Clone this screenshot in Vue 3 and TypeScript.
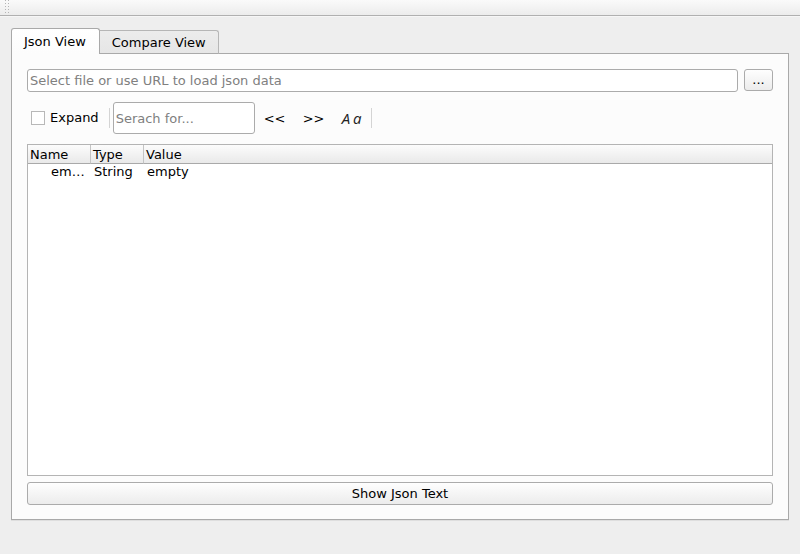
<script setup lang="ts">
import { ref } from 'vue'

interface JsonNode {
  name: string
  type: string
  value: string
}

type TabId = 'json' | 'compare'

const tabs: { id: TabId; label: string }[] = [
  { id: 'json', label: 'Json View' },
  { id: 'compare', label: 'Compare View' },
]

const activeTab = ref<TabId>('json')
const source = ref('')
const search = ref('')
const expand = ref(false)
const matchCase = ref(false)
const nodes = ref<JsonNode[]>([{ name: 'empty', type: 'String', value: 'empty' }])
</script>

<template>
  <div class="window">
    <header class="toolbar"><span class="grip"></span></header>

    <main class="content">
      <div class="tabs" role="tablist">
        <button
          v-for="tab in tabs"
          :key="tab.id"
          type="button"
          role="tab"
          class="tab"
          :class="{ active: tab.id === activeTab }"
          :aria-selected="tab.id === activeTab"
          @click="activeTab = tab.id"
        >{{ tab.label }}</button>
      </div>

      <section class="pane" role="tabpanel">
        <div class="source-row">
          <input
            v-model="source"
            class="field source"
            type="text"
            aria-label="Json source"
            placeholder="Select file or use URL to load json data"
          />
          <button type="button" class="push browse" aria-label="Browse">...</button>
        </div>

        <div class="tools">
          <label class="expand">
            <input v-model="expand" type="checkbox" class="check" />
            <span>Expand</span>
          </label>
          <span class="separator"></span>
          <input v-model="search" class="field search" type="text" aria-label="Search" placeholder="Serach for..." />
          <button type="button" class="tool" aria-label="Find previous">&lt;&lt;</button>
          <button type="button" class="tool" aria-label="Find next">&gt;&gt;</button>
          <button
            type="button"
            class="tool case"
            aria-label="Match case"
            :aria-pressed="matchCase"
            @click="matchCase = !matchCase"
          ><span>A</span><span>a</span></button>
          <span class="separator"></span>
        </div>

        <div class="tree">
          <table>
            <colgroup>
              <col class="col-name" />
              <col class="col-type" />
              <col />
            </colgroup>
            <thead>
              <tr>
                <th scope="col">Name</th>
                <th scope="col">Type</th>
                <th scope="col">Value</th>
              </tr>
            </thead>
            <tbody>
              <tr v-for="node in nodes" :key="node.name">
                <td class="name">{{ node.name }}</td>
                <td>{{ node.type }}</td>
                <td>{{ node.value }}</td>
              </tr>
            </tbody>
          </table>
        </div>

        <button type="button" class="push show">Show Json Text</button>
      </section>
    </main>
  </div>
</template>

<style>
body {
  margin: 0;
  background: #eeeeee;
}
</style>

<style scoped>
.window,
.window * {
  box-sizing: border-box;
}

.window {
  display: flex;
  flex-direction: column;
  min-height: 100vh;
  background: #eeeeee;
  color: #000;
  font-family: "DejaVu Sans", sans-serif;
  font-size: 13px;
  line-height: 16px;
}

button,
input {
  margin: 0;
  color: inherit;
  font: inherit;
}

.toolbar {
  height: 16px;
  padding-left: 5px;
  border-bottom: 1px solid #b0b0b0;
  background: linear-gradient(#fafafa, #ececec);
  box-shadow: 0 1px #f6f6f6;
}

.grip {
  display: block;
  width: 4px;
  height: 15px;
  background: conic-gradient(at 1px 1px, transparent 270deg, #b4b4b4 0) 0 0 / 3px 3px;
}

.content {
  display: flex;
  flex: 1;
  flex-direction: column;
  padding: 12px 11px 34px;
}

.tabs {
  display: flex;
  align-items: flex-end;
  height: 26px;
  margin-bottom: -1px;
  z-index: 1;
}

.tab {
  height: 24px;
  padding: 1px 12px 0;
  border: 1px solid #b6b6b6;
  border-left: 0;
  border-bottom-color: #a9a9a9;
  border-radius: 0 3px 0 0;
  background: linear-gradient(#ececec, #e6e6e6);
}

.tab.active {
  height: 26px;
  padding: 0 13px 0 12px;
  border: 1px solid #a9a9a9;
  border-bottom: 0;
  border-radius: 3px 3px 0 0;
  background: linear-gradient(#ffffff, #fcfcfc);
}

.pane {
  display: flex;
  flex: 1;
  flex-direction: column;
  padding: 15px 15px 14px;
  border: 1px solid #a9a9a9;
  background: #fcfcfc;
  box-shadow: 0 1px #dedede;
}

.source-row {
  display: flex;
  align-items: flex-start;
  gap: 6px;
}

.field {
  min-width: 0;
  padding: 0 2px;
  border: 1px solid #ababab;
  border-radius: 3px;
  background: #fff;
  outline: none;
}

.field::placeholder {
  color: #808080;
  opacity: 1;
}

.source {
  flex: 1;
  height: 23px;
}

.push {
  padding: 0;
  border: 1px solid #ababab;
  border-radius: 3px;
  background: linear-gradient(#fefefe, #ececec);
}

.browse {
  width: 29px;
  height: 22px;
}

.tools {
  display: flex;
  align-items: center;
  height: 32px;
  margin: 10px 0;
  padding-left: 4px;
}

.expand {
  display: flex;
  align-items: center;
  gap: 5px;
  margin-right: 10px;
}

.check {
  width: 14px;
  height: 14px;
  border: 1px solid #b8b8b8;
  background: #fff;
  appearance: none;
}

.check:checked {
  background: #606060;
  box-shadow: inset 0 0 0 2px #fff;
}

.separator {
  width: 1px;
  height: 20px;
  background: #d4d4d4;
}

.search {
  width: 142px;
  height: 32px;
  margin-left: 3px;
}

.tool {
  width: 39px;
  height: 32px;
  padding: 2px 0 0 1px;
  border: 0;
  background: transparent;
}

.case {
  display: flex;
  align-items: center;
  justify-content: center;
  gap: 3px;
  width: 38px;
  padding: 0;
  color: #222;
  font-family: "Open Sans", sans-serif;
  font-size: 15px;
  font-style: italic;
}

.tree {
  flex: 1;
  margin-bottom: 6px;
  border: 1px solid #b4b4b4;
  background: #fff;
}

table {
  width: 100%;
  border-spacing: 0;
  table-layout: fixed;
}

.col-name {
  width: 63px;
}

.col-type {
  width: 53px;
}

th {
  height: 19px;
  padding: 2px 2px 0;
  border-right: 1px solid #c4c4c4;
  border-bottom: 1px solid #a9a9a9;
  background: linear-gradient(#fcfcfc, #e9e9e9);
  font-weight: normal;
  text-align: left;
}

th:last-child {
  border-right: 0;
}

td {
  overflow: hidden;
  height: 16px;
  padding: 0 3px;
  text-overflow: ellipsis;
  white-space: nowrap;
}

.name {
  padding-left: 23px;
}

.show {
  height: 23px;
}
</style>
